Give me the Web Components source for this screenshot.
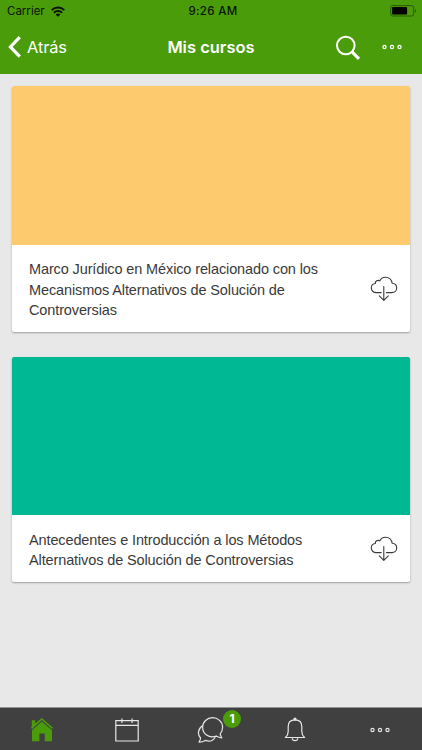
<!DOCTYPE html>
<html lang="es">
<head>
<meta charset="utf-8">
<title>Mis cursos</title>
<style>
    html, body { height: 100%; margin: 0; }
    body {
        --green: #4a9c0a;
        --bar: #404040;
        overflow: hidden;
        font-family: Inter, "Liberation Sans", sans-serif;
    }
</style>
</head>
<body>
<app-shell>
    <status-bar slot="top" carrier="Carrier" time="9:26 AM"></status-bar>
    <nav-header slot="top" back="Atrás">Mis cursos</nav-header>
    <course-card color="#fdca6e">Marco Jurídico en México relacionado con los Mecanismos Alternativos de Solución de Controversias</course-card>
    <course-card color="#00b894">Antecedentes e Introducción a los Métodos Alternativos de Solución de Controversias</course-card>
    <tab-bar slot="bottom">
        <tab-item icon="home" active></tab-item>
        <tab-item icon="calendar"></tab-item>
        <tab-item icon="chat" badge="1"></tab-item>
        <tab-item icon="bell"></tab-item>
        <tab-item icon="more"></tab-item>
    </tab-bar>
</app-shell>

<script>
/**
 * BaseComponent - renders styles() and template() into an open shadow root
 */
class BaseComponent extends HTMLElement {
    constructor() {
        super();
        this.attachShadow({ mode: 'open' });
    }

    connectedCallback() {
        this.render();
    }

    styles() {
        return '';
    }

    template() {
        return '';
    }

    render() {
        this.shadowRoot.innerHTML = `<style>${this.styles()}</style>${this.template()}`;
    }
}

const ICONS = {
    home: `<svg width="24" height="26" viewBox="0 0 24 26" fill="currentColor">
        <path d="M1.8 9.4V3.2H5.2V6.4L11.8.9 23 10.8 21.9 11.9 11.8 3 2.2 11.9 .9 10.8z"/>
        <path d="M11.8 4.4 22 13.2V24.2H14.8V16.4H9.4V24.2H2V13.2z"/></svg>`,
    calendar: `<svg width="24" height="26" viewBox="0 0 24 26" fill="none" stroke="currentColor" stroke-width="1.2">
        <path d="M.8 3.6H23.2V24H.8zM.8 8.4H23.2M6.9 1.4V6M17.1 1.4V6"/></svg>`,
    chat: `<svg width="28" height="26" viewBox="0 0 28 26" fill="none" stroke="currentColor" stroke-width="1.2" stroke-linejoin="round">
        <path d="M15.5.7C20.8.7 25.6 4.6 25.6 10.1C25.6 13 24.6 15.3 23.2 16.9C23.3 18.3 24.2 19.4 24.8 21C22.8 20.8 21 20.3 19.3 19.1C11.7 21.8 5.6 16.6 5.6 10.2C5.6 4.9 10.2.7 15.5.7z"/>
        <path d="M5.8 8.4C1 11.4.1 17.3 3.5 21C3.6 22.5 2.6 23.7 2.1 25.1C4.5 25.2 6.6 24.4 8.3 23.4C12 24.8 16 23.8 18.3 20.2"/></svg>`,
    bell: `<svg width="22" height="26" viewBox="0 0 22 26" fill="none" stroke="currentColor" stroke-width="1.2" stroke-linejoin="round">
        <path d="M1.4 20.5C3.2 18.9 4.2 17.3 4.2 14.5V9.6C4.2 5.2 7 2.9 11 2.9S17.8 5.2 17.8 9.6V14.5C17.8 17.3 18.8 18.9 20.6 20.5zM8.2 21.2C8.4 24.5 13.6 24.5 13.8 21.2"/>
        <circle cx="11" cy="2.1" r="1" fill="currentColor"/></svg>`,
    more: `<svg width="22" height="8" viewBox="0 0 22 8" fill="none" stroke="currentColor" stroke-width="1.2">
        <circle cx="3.5" cy="4" r="1.6"/><circle cx="11" cy="4" r="1.6"/><circle cx="18.5" cy="4" r="1.6"/></svg>`,
    download: `<svg width="28" height="26" viewBox="0 0 28 26" fill="none" stroke="currentColor" stroke-width="1.1" stroke-linecap="round" stroke-linejoin="round">
        <path d="M11.2 16.6H6.2C3.4 16.6 1.3 14.5 1.3 12S3.2 7.7 5.3 7.5C5 5.2 7.8 3.6 9.7 4.9C10.8 2.6 12.9 1.2 15.4 1.2C19.2 1.2 21.8 3.9 22.1 7.3C24.8 7.5 26.7 9.3 26.7 12C26.7 14.6 24.6 16.6 21.9 16.6H16.4"/>
        <path d="M13.8 10.5V24.2M9.3 19.9 13.8 24.4 18.3 19.9"/></svg>`,
    search: `<svg width="26" height="26" viewBox="0 0 26 26" fill="none" stroke="currentColor">
        <circle cx="10.8" cy="10.5" r="8.8" stroke-width="2"/>
        <path d="M16.8 16.7 24 23.9" stroke-width="3.2"/></svg>`,
    back: `<svg width="13" height="22" viewBox="0 0 13 22" fill="none" stroke="currentColor" stroke-width="3.2">
        <path d="M11.8 1.2 2.4 10.9 11.8 20.6"/></svg>`,
    wifi: `<svg width="14" height="11" viewBox="0 0 14 11" fill="none" stroke="currentColor" stroke-width="2">
        <path d="M.7 4.1C4.2.5 9.8.5 13.3 4.1M2.9 6.8C5.2 4.5 8.8 4.5 11.1 6.8"/>
        <path d="M7 10.7 4.6 8.4C5.9 7.2 8.1 7.2 9.4 8.4z" fill="currentColor" stroke="none"/></svg>`,
    battery: `<svg width="27" height="12" viewBox="0 0 27 12">
        <rect x=".7" y=".6" width="23" height="10.4" rx="2.2" fill="none" stroke="#275c02" stroke-width="1"/>
        <path d="M25 4V7.8C26.4 7.3 26.4 4.5 25 4z" fill="#275c02"/>
        <rect x="2.1" y="2" width="15" height="7.6" rx=".8"/></svg>`
};

class AppShell extends BaseComponent {
    styles() {
        return `
            :host { display: flex; flex-direction: column; height: 100vh; background: #e8e8e8; }
            main {
                flex: 1; display: flex; flex-direction: column; gap: 24.6px;
                padding: 12.5px 12.4px 0; overflow: hidden;
            }
        `;
    }

    template() {
        return `<slot name="top"></slot><main><slot></slot></main><slot name="bottom"></slot>`;
    }
}

class StatusBar extends BaseComponent {
    styles() {
        return `
            :host {
                display: grid; grid-template-columns: 1fr auto 1fr; align-items: center;
                height: 22px; padding: 0 5px 0 7px; box-sizing: border-box;
                background: var(--green); color: #0a1400; font-size: 11.5px;
            }
            .left { display: flex; align-items: center; gap: 6px; }
            .time { font-weight: 500; letter-spacing: .35px; padding-left: 2px; }
            .right { display: flex; justify-content: flex-end; }
            svg { display: block; }
        `;
    }

    template() {
        return `
            <div class="left"><span>${this.getAttribute('carrier')}</span>${ICONS.wifi}</div>
            <span class="time">${this.getAttribute('time')}</span>
            <div class="right">${ICONS.battery}</div>
        `;
    }
}

class NavHeader extends BaseComponent {
    styles() {
        return `
            :host {
                display: grid; grid-template-columns: 1fr auto 1fr; align-items: center;
                height: 51.5px; padding: 0 19px 1px 8px; box-sizing: border-box;
                background: var(--green); color: #fff;
            }
            .back { display: flex; align-items: center; gap: 6px; font-size: 16.4px; letter-spacing: -.1px; }
            .title { font-size: 16.5px; font-weight: 600; padding-left: 11px; }
            .actions { display: flex; justify-content: flex-end; align-items: center; gap: 20px; }
            svg { display: block; }
            .actions svg:first-child { margin-top: 1px; }
        `;
    }

    template() {
        return `
            <div class="back">${ICONS.back}<span>${this.getAttribute('back')}</span></div>
            <div class="title"><slot></slot></div>
            <div class="actions">${ICONS.search}${ICONS.more}</div>
        `;
    }
}

class CourseCard extends BaseComponent {
    styles() {
        return `
            :host {
                display: block; background: #fff; border-radius: 2px; overflow: hidden;
                box-shadow: 0 1px 2px rgba(0, 0, 0, .32);
                font-family: "Liberation Sans", Arial, sans-serif;
            }
            .cover { height: 158.5px; background: ${this.getAttribute('color')}; }
            .body {
                display: flex; align-items: center; justify-content: space-between;
                padding: 14.9px 12px 11.3px 16.6px; color: #3a3a3a;
            }
            .name { width: 300px; font-size: 14.5px; line-height: 20.4px; letter-spacing: -.12px; }
            svg { display: block; margin-bottom: 3px; }
        `;
    }

    template() {
        return `
            <div class="cover"></div>
            <div class="body"><div class="name"><slot></slot></div>${ICONS.download}</div>
        `;
    }
}

class TabBar extends BaseComponent {
    styles() {
        return `
            :host {
                display: flex; height: 43px; box-sizing: border-box;
                background: var(--bar); border-top: 1px solid #939393;
            }
        `;
    }

    template() {
        return `<slot></slot>`;
    }
}

class TabItem extends BaseComponent {
    styles() {
        return `
            :host {
                flex: 1; display: flex; align-items: center; justify-content: center;
                padding-top: 2px; color: #e6e6e6;
            }
            :host([active]) { color: var(--green); }
            .icon { position: relative; }
            svg { display: block; }
            .badge {
                position: absolute; left: 26px; top: -7px; width: 18px; height: 18px;
                border-radius: 50%; background: var(--green); color: #fff;
                font-size: 12px; font-weight: 700; line-height: 18px; text-align: center;
            }
        `;
    }

    template() {
        const badge = this.getAttribute('badge');
        return `
            <div class="icon">
                ${ICONS[this.getAttribute('icon')]}
                ${badge ? `<span class="badge">${badge}</span>` : ''}
            </div>
        `;
    }
}

customElements.define('app-shell', AppShell);
customElements.define('status-bar', StatusBar);
customElements.define('nav-header', NavHeader);
customElements.define('course-card', CourseCard);
customElements.define('tab-bar', TabBar);
customElements.define('tab-item', TabItem);
</script>
</body>
</html>
